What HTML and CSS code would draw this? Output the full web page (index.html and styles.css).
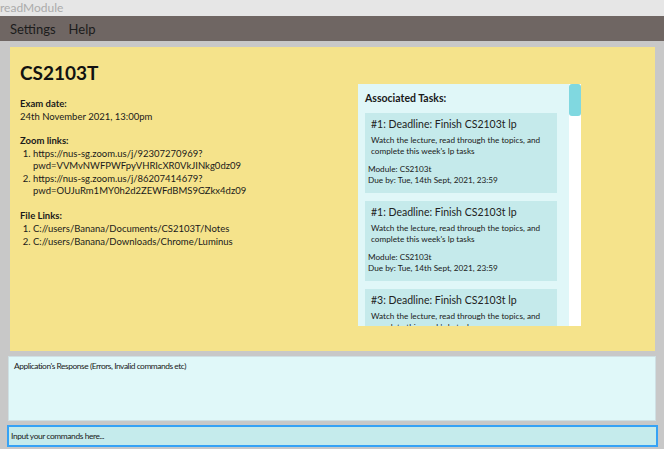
FILE: index.html
```html
<!DOCTYPE html>
<html>
<head>
<meta charset="utf-8">
<link rel="stylesheet" href="styles.css">
</head>
<body>
<div class="titlebar">readModule</div>
<div class="menubar"><span>Settings</span><span>Help</span></div>
<div class="main">
  <div class="module">
    <div class="details">
      <h1 class="code">CS2103T</h1>
      <div class="section">
        <div class="label">Exam date:</div>
        <div class="value">24th November 2021, 13:00pm</div>
      </div>
      <div class="section">
        <div class="label">Zoom links:</div>
        <ol class="list">
          <li>https://nus-sg.zoom.us/j/92307270969?<br>pwd=VVMvNWFPWFpyVHRIcXR0VkJINkg0dz09</li>
          <li>https://nus-sg.zoom.us/j/86207414679?<br>pwd=OUJuRm1MY0h2d2ZEWFdBMS9GZkx4dz09</li>
        </ol>
      </div>
      <div class="section">
        <div class="label">File Links:</div>
        <ol class="list files">
          <li>C://users/Banana/Documents/CS2103T/Notes</li>
          <li>C://users/Banana/Downloads/Chrome/Luminus</li>
        </ol>
      </div>
    </div>
    <div class="tasks">
      <div class="tasks-content">
        <div class="tasks-title">Associated Tasks:</div>
        <div class="card">
          <div class="card-title">#1: Deadline: Finish CS2103t lp</div>
          <div class="card-desc">Watch the lecture, read through the topics, and complete this week's lp tasks</div>
          <div class="card-meta">Module: CS2103t</div>
          <div class="card-meta">Due by: Tue, 14th Sept, 2021, 23:59</div>
        </div>
        <div class="card">
          <div class="card-title">#1: Deadline: Finish CS2103t lp</div>
          <div class="card-desc">Watch the lecture, read through the topics, and complete this week's lp tasks</div>
          <div class="card-meta">Module: CS2103t</div>
          <div class="card-meta">Due by: Tue, 14th Sept, 2021, 23:59</div>
        </div>
        <div class="card">
          <div class="card-title">#3: Deadline: Finish CS2103t lp</div>
          <div class="card-desc">Watch the lecture, read through the topics, and complete this week's lp tasks</div>
          <div class="card-meta">Module: CS2103t</div>
          <div class="card-meta">Due by: Tue, 14th Sept, 2021, 23:59</div>
        </div>
      </div>
      <div class="scrollbar"><div class="thumb"></div></div>
    </div>
  </div>
  <div class="response">Application's Response (Errors, Invalid commands etc)</div>
  <div class="command">Input your commands here...</div>
</div>
</body>
</html>
```
FILE: styles.css
```css
* { box-sizing: border-box; }
html, body { margin: 0; padding: 0; }
body {
  width: 664px;
  height: 449px;
  overflow: hidden;
  font-family: Lato, "Noto Sans", sans-serif;
  background: #c8c8c8;
  color: #1a1a1a;
}
.titlebar {
  height: 16px;
  background: #e6e6e6;
  color: #ababab;
  font-size: 12px;
  line-height: 16px;
  padding-left: 0;
}
.menubar {
  height: 25px;
  background: #6f6663;
  display: flex;
  align-items: center;
  gap: 13px;
  padding-left: 10px;
  font-size: 13px;
  color: #1c1c1c;
}
.main {
  display: flex;
  flex-direction: column;
  padding-top: 6px;
}
.module {
  margin: 0 9px 0 10px;
  height: 304px;
  background: #f5e38b;
  display: grid;
  grid-template-columns: 1fr 223px;
  padding: 0 74px 0 10px;
}
.code {
  margin: 14px 0 0;
  font-size: 19px;
  font-weight: 700;
  line-height: 24px;
  color: #111;
}
.section { margin-top: 12px; font-size: 9.5px; line-height: 12.5px; }
.section:first-of-type { margin-top: 13px; }
.label { font-weight: 700; }
.list { margin: 0; padding-left: 13px; }
.files li { line-height: 13px; }
.tasks {
  margin-top: 37px;
  height: 242px;
  background: #e0f7f8;
  display: flex;
  overflow: hidden;
}
.tasks-content {
  flex: 1;
  padding: 7px 12px 0 7px;
  overflow: hidden;
}
.tasks-title {
  font-size: 10.5px;
  font-weight: 700;
  line-height: 15px;
  margin-bottom: 7px;
}
.card {
  background: #c5eaeb;
  padding: 4px 6px 0 3px;
  margin-bottom: 8px;
  height: 80px;
}
.card-title {
  font-size: 10.5px;
  font-weight: 400;
  line-height: 14px;
  padding-left: 3px;
  color: #222;
}
.card-desc {
  font-size: 8.2px;
  line-height: 11px;
  padding-left: 3px;
  margin-top: 4px;
}
.card-desc + .card-meta { margin-top: 7px; }
.card-meta { font-size: 8.2px; line-height: 11px; }
.scrollbar {
  width: 12px;
  background: #ffffff;
}
.thumb {
  height: 32px;
  background: #80d8e0;
  border-radius: 3px;
}
.response {
  margin: 5px 8px 0 8px;
  height: 65px;
  background: #e0f8f9;
  border: 1px solid #cfe0e4;
  font-size: 8.4px;
  letter-spacing: -0.45px;
  padding: 3px 5px;
  line-height: 12px;
}
.command {
  margin: 4px 6px 0 7px;
  height: 22px;
  background: #c5ebec;
  border: 2px solid #36a2f5;
  font-size: 8.4px;
  letter-spacing: -0.4px;
  line-height: 18px;
  padding-left: 2px;
}
```
